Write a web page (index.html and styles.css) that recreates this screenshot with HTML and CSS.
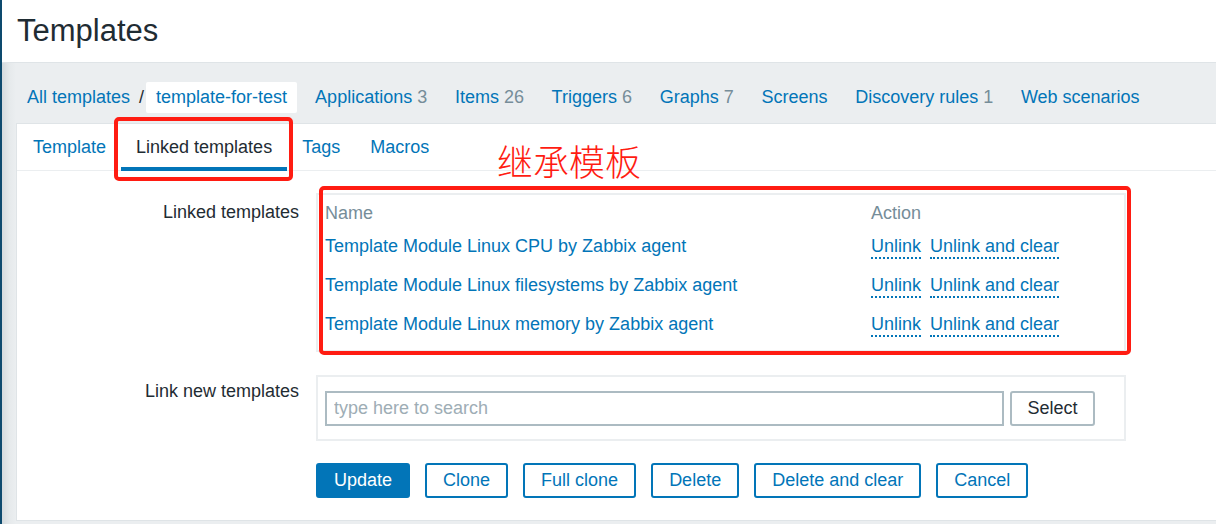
FILE: index.html
```html
<!DOCTYPE html>
<html lang="en">
<head>
<meta charset="utf-8">
<title>Templates</title>
<link rel="stylesheet" href="styles.css">
</head>
<body>
<div class="sidebar-edge"></div>
<div class="main">
  <header class="page-header">
    <h1 class="page-title">Templates</h1>
  </header>
  <div class="content">
    <nav class="object-nav">
      <a class="link" href="#">All templates</a>
      <span class="sep">/</span>
      <span class="crumb-current"><a class="link" href="#">template-for-test</a></span>
      <a class="nav-item link" href="#">Applications <span class="count">3</span></a>
      <a class="nav-item link" href="#">Items <span class="count">26</span></a>
      <a class="nav-item link" href="#">Triggers <span class="count">6</span></a>
      <a class="nav-item link" href="#">Graphs <span class="count">7</span></a>
      <a class="nav-item link" href="#">Screens</a>
      <a class="nav-item link" href="#">Discovery rules <span class="count">1</span></a>
      <a class="nav-item link" href="#">Web scenarios</a>
    </nav>
    <section class="panel">
      <ul class="tabs">
        <li class="tab"><a class="link" href="#">Template</a></li>
        <li class="tab tab-active">Linked templates</li>
        <li class="tab"><a class="link" href="#">Tags</a></li>
        <li class="tab"><a class="link" href="#">Macros</a></li>
      </ul>
      <div class="form">
        <div class="form-label label-first">Linked templates</div>
        <div class="form-field">
          <div class="table-box">
            <table class="linked-table">
              <thead>
                <tr><th class="col-name">Name</th><th>Action</th></tr>
              </thead>
              <tbody>
                <tr>
                  <td><a class="link" href="#">Template Module Linux CPU by Zabbix agent</a></td>
                  <td><a class="action" href="#">Unlink</a><a class="action" href="#">Unlink and clear</a></td>
                </tr>
                <tr>
                  <td><a class="link" href="#">Template Module Linux filesystems by Zabbix agent</a></td>
                  <td><a class="action" href="#">Unlink</a><a class="action" href="#">Unlink and clear</a></td>
                </tr>
                <tr>
                  <td><a class="link" href="#">Template Module Linux memory by Zabbix agent</a></td>
                  <td><a class="action" href="#">Unlink</a><a class="action" href="#">Unlink and clear</a></td>
                </tr>
              </tbody>
            </table>
          </div>
        </div>
        <div class="form-label label-second">Link new templates</div>
        <div class="form-field field-second">
          <div class="multiselect-box">
            <input class="search-input" type="text" placeholder="type here to search">
            <button class="btn-grey" type="button">Select</button>
          </div>
        </div>
        <div class="form-label"></div>
        <div class="form-field buttons">
          <button class="btn btn-primary" type="button">Update</button>
          <button class="btn" type="button">Clone</button>
          <button class="btn" type="button">Full clone</button>
          <button class="btn" type="button">Delete</button>
          <button class="btn" type="button">Delete and clear</button>
          <button class="btn" type="button">Cancel</button>
        </div>
      </div>
    </section>
  </div>
</div>
<div class="mark mark-tab"></div>
<div class="mark mark-table"></div>
<div class="mark-text">继承模板</div>
</body>
</html>
```

FILE: styles.css
```css
* { box-sizing: border-box; }
html, body { margin: 0; padding: 0; }
body {
  width: 1216px;
  height: 524px;
  overflow: hidden;
  display: flex;
  background: #ebeef0;
  font-family: "Liberation Sans", Arial, sans-serif;
  font-size: 18px;
  color: #1f2c33;
  position: relative;
}
.sidebar-edge {
  width: 2px;
  flex: none;
  background: #0d4a6e;
}
.main {
  flex: 1;
  display: flex;
  flex-direction: column;
  min-width: 0;
}
.page-header {
  height: 63px;
  flex: none;
  background: #fff;
  border-bottom: 1px solid #dfe4e7;
  display: flex;
  align-items: center;
  padding-left: 15px;
}
.page-title {
  margin: 0;
  font-weight: normal;
  font-size: 31px;
  color: #1f2c33;
  padding-top: 0;
}
.content {
  flex: 1;
  background: linear-gradient(to right, #d4dadd 0px, #e6eaec 8px, #ebeef0 14px);
  padding-left: 14px;
}
.link {
  color: #0275b8;
  text-decoration: none;
}
.object-nav {
  display: flex;
  align-items: center;
  height: 60px;
  padding-top: 9px;
  padding-left: 11px;
  white-space: nowrap;
}
.sep {
  margin: 0 2px 0 9px;
  color: #1f2c33;
}
.crumb-current {
  background: #fff;
  border-radius: 2px;
  height: 31px;
  display: flex;
  align-items: center;
  padding: 0 10px;
}
.nav-item {
  margin-left: 18px;
}
.nav-item + .nav-item {
  margin-left: 27.7px;
}
.count {
  color: #768d99;
}
.panel {
  background: #fff;
  border: 1px solid #dfe4e7;
  border-right: none;
  height: 398px;
  width: 1200px;
}
.tabs {
  list-style: none;
  margin: 0;
  padding: 0 0 0 1px;
  display: flex;
  height: 47px;
  border-bottom: 1px solid #ebeef0;
}
.tab {
  padding: 0 15px;
  display: flex;
  align-items: center;
  padding-top: 3px;
  margin-bottom: -1px;
  border-bottom: 4px solid transparent;
}
.tab-active {
  border-bottom-color: #0275b8;
  color: #1f2c33;
}
.form {
  display: grid;
  grid-template-columns: 282px 810px;
  column-gap: 17px;
  padding-top: 22px;
}
.form-label {
  text-align: right;
  line-height: 21px;
}
.label-first { padding-top: 9px; }
.label-second { padding-top: 6px; margin-top: 23px; }
.field-second { margin-top: 23px; }
.table-box {
  border: 2px solid #ebeef0;
  padding: 4px 7px 6px 7px;
}
.linked-table {
  border-collapse: collapse;
  width: 100%;
}
.linked-table th {
  text-align: left;
  font-weight: normal;
  color: #768d99;
  height: 28px;
  padding: 0;
  vertical-align: middle;
}
.linked-table .col-name { width: 546px; }
.linked-table td {
  height: 39px;
  padding: 0;
  vertical-align: middle;
  white-space: nowrap;
}
.action {
  color: #0275b8;
  text-decoration: none;
  border-bottom: 2px dotted #0275b8;
  padding-bottom: 1px;
  margin-right: 9px;
}
.multiselect-box {
  border: 2px solid #ebeef0;
  height: 66px;
  display: flex;
  align-items: center;
  padding: 0 7px;
  gap: 6px;
}
.search-input {
  width: 679px;
  height: 35px;
  border: 2px solid #acbbc2;
  border-radius: 0;
  padding: 0 7px;
  font-family: inherit;
  font-size: 18px;
  color: #1f2c33;
}
.search-input::placeholder { color: #9eadb5; }
.btn-grey {
  width: 85px;
  height: 35px;
  background: #fff;
  border: 2px solid #acbbc2;
  border-radius: 3px;
  font-family: inherit;
  font-size: 18px;
  color: #1f2c33;
}
.buttons {
  display: flex;
  gap: 15px;
  margin-top: 22px;
}
.btn {
  height: 35px;
  padding: 0 16px;
  background: #fff;
  border: 2px solid #0275b8;
  border-radius: 3px;
  color: #0275b8;
  font-family: inherit;
  font-size: 18px;
}
.btn-primary {
  background: #0275b8;
  color: #fff;
  padding: 0 16px;
}
.mark {
  position: absolute;
  border: 4px solid #ff1c12;
  border-radius: 5px;
}
.mark-tab {
  left: 114px;
  top: 117px;
  width: 179px;
  height: 64px;
}
.mark-table {
  left: 319px;
  top: 186px;
  width: 812px;
  height: 169px;
}
.mark-text {
  position: absolute;
  left: 497px;
  top: 137px;
  font-family: "Noto Sans CJK SC", sans-serif;
  font-size: 36px;
  font-weight: 300;
  color: #ff1c12;
  line-height: 46px;
}
```
